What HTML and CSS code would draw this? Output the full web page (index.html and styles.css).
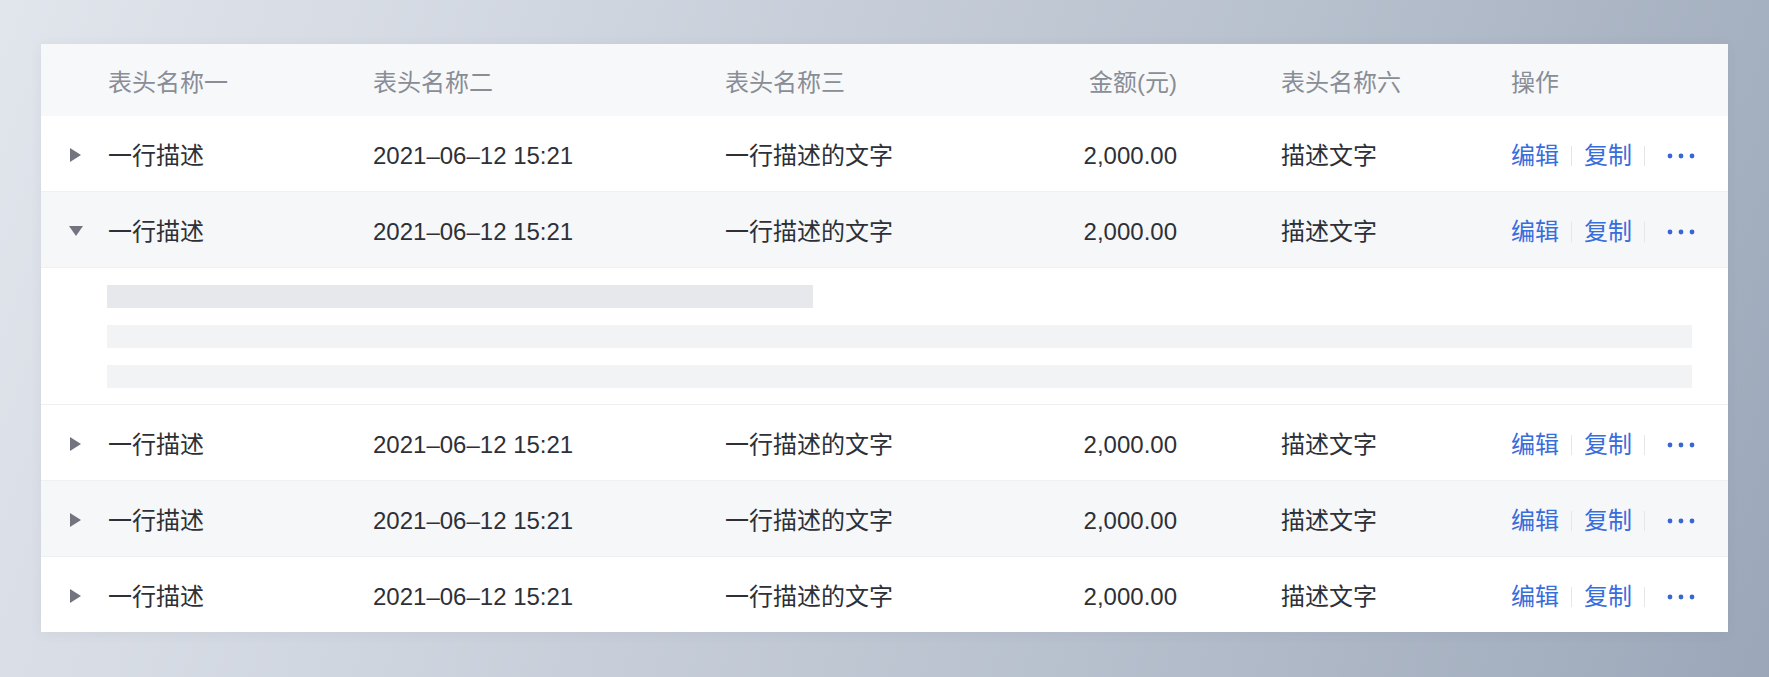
FILE: index.html
```html
<!DOCTYPE html>
<html lang="zh-CN">
<head>
<meta charset="utf-8">
<title>表格</title>
<link rel="stylesheet" href="styles.css">
</head>
<body>
<div class="card">
  <div class="row head">
    <div class="cell"></div>
    <div class="cell">表头名称一</div>
    <div class="cell">表头名称二</div>
    <div class="cell">表头名称三</div>
    <div class="cell num">金额(元)</div>
    <div class="cell">表头名称六</div>
    <div class="cell">操作</div>
  </div>

  <div class="row">
    <div class="cell exp"><span class="tri-right"></span></div>
    <div class="cell">一行描述</div>
    <div class="cell">2021–06–12 15:21</div>
    <div class="cell">一行描述的文字</div>
    <div class="cell num">2,000.00</div>
    <div class="cell">描述文字</div>
    <div class="cell ops"><a class="link">编辑</a><span class="sep"></span><a class="link">复制</a><span class="sep"></span><svg class="more" width="28" height="6" viewBox="0 0 28 6"><circle cx="3" cy="3" r="2.4"/><circle cx="14" cy="3" r="2.4"/><circle cx="25" cy="3" r="2.4"/></svg></div>
  </div>

  <div class="row alt">
    <div class="cell exp"><span class="tri-down"></span></div>
    <div class="cell">一行描述</div>
    <div class="cell">2021–06–12 15:21</div>
    <div class="cell">一行描述的文字</div>
    <div class="cell num">2,000.00</div>
    <div class="cell">描述文字</div>
    <div class="cell ops"><a class="link">编辑</a><span class="sep"></span><a class="link">复制</a><span class="sep"></span><svg class="more" width="28" height="6" viewBox="0 0 28 6"><circle cx="3" cy="3" r="2.4"/><circle cx="14" cy="3" r="2.4"/><circle cx="25" cy="3" r="2.4"/></svg></div>
  </div>

  <div class="expanded">
    <div class="bar bar-short"></div>
    <div class="bar bar-light"></div>
    <div class="bar bar-light"></div>
  </div>

  <div class="row">
    <div class="cell exp"><span class="tri-right"></span></div>
    <div class="cell">一行描述</div>
    <div class="cell">2021–06–12 15:21</div>
    <div class="cell">一行描述的文字</div>
    <div class="cell num">2,000.00</div>
    <div class="cell">描述文字</div>
    <div class="cell ops"><a class="link">编辑</a><span class="sep"></span><a class="link">复制</a><span class="sep"></span><svg class="more" width="28" height="6" viewBox="0 0 28 6"><circle cx="3" cy="3" r="2.4"/><circle cx="14" cy="3" r="2.4"/><circle cx="25" cy="3" r="2.4"/></svg></div>
  </div>

  <div class="row alt">
    <div class="cell exp"><span class="tri-right"></span></div>
    <div class="cell">一行描述</div>
    <div class="cell">2021–06–12 15:21</div>
    <div class="cell">一行描述的文字</div>
    <div class="cell num">2,000.00</div>
    <div class="cell">描述文字</div>
    <div class="cell ops"><a class="link">编辑</a><span class="sep"></span><a class="link">复制</a><span class="sep"></span><svg class="more" width="28" height="6" viewBox="0 0 28 6"><circle cx="3" cy="3" r="2.4"/><circle cx="14" cy="3" r="2.4"/><circle cx="25" cy="3" r="2.4"/></svg></div>
  </div>

  <div class="row last">
    <div class="cell exp"><span class="tri-right"></span></div>
    <div class="cell">一行描述</div>
    <div class="cell">2021–06–12 15:21</div>
    <div class="cell">一行描述的文字</div>
    <div class="cell num">2,000.00</div>
    <div class="cell">描述文字</div>
    <div class="cell ops"><a class="link">编辑</a><span class="sep"></span><a class="link">复制</a><span class="sep"></span><svg class="more" width="28" height="6" viewBox="0 0 28 6"><circle cx="3" cy="3" r="2.4"/><circle cx="14" cy="3" r="2.4"/><circle cx="25" cy="3" r="2.4"/></svg></div>
  </div>
</div>
</body>
</html>
```

FILE: styles.css
```css
html, body {
  margin: 0;
  padding: 0;
}

body {
  width: 1769px;
  height: 677px;
  box-sizing: border-box;
  padding: 44px 41px;
  background: linear-gradient(110deg, #e1e5ec 0%, #cfd5df 30%, #b7c0cd 65%, #9ba7b9 100%);
  font-family: "Liberation Sans", "Noto Sans CJK SC", sans-serif;
  font-size: 24px;
  color: #2d3036;
  overflow: hidden;
}

.card {
  background: #ffffff;
  box-shadow: 0 2px 12px rgba(60, 70, 90, 0.06);
}

.row {
  display: grid;
  grid-template-columns: 67px 265px 352px 300px 256px 230px 1fr;
  align-items: center;
  height: 75px;
  box-sizing: content-box;
  border-bottom: 1px solid #eef0f3;
  background: #ffffff;
}

.row.alt {
  background: #f6f7f9;
}

.row.last {
  border-bottom: none;
}

.row.head {
  height: 72px;
  border-bottom: none;
  background: #f7f8fa;
  color: #888d96;
}

.cell {
  line-height: 28px;
  padding-top: 5px;
  white-space: nowrap;
}

.cell.num {
  text-align: right;
  padding-right: 104px;
}

.cell.exp {
  display: flex;
  align-items: center;
  justify-content: flex-start;
  padding-left: 29px;
  padding-top: 2px;
  height: 16px;
}

.tri-right {
  width: 0;
  height: 0;
  border-top: 7px solid transparent;
  border-bottom: 7px solid transparent;
  border-left: 11px solid #72757f;
}

.tri-down {
  width: 0;
  height: 0;
  margin-left: -1px;
  border-left: 7px solid transparent;
  border-right: 7px solid transparent;
  border-top: 10px solid #72757f;
}

.ops {
  display: flex;
  align-items: center;
}

.link {
  color: #386ddc;
  cursor: pointer;
}

.sep {
  display: inline-block;
  width: 1px;
  height: 20px;
  background: #e4e6ea;
  margin: 0 12px;
}

.more {
  fill: #3866d6;
  margin-left: 10px;
}

.expanded {
  padding: 17px 36px 16px 66px;
  border-bottom: 1px solid #eef0f3;
  display: flex;
  flex-direction: column;
  gap: 17px;
}

.bar {
  height: 23px;
  background: #f2f3f5;
}

.bar-short {
  width: 706px;
  background: #e6e8eb;
}
```
